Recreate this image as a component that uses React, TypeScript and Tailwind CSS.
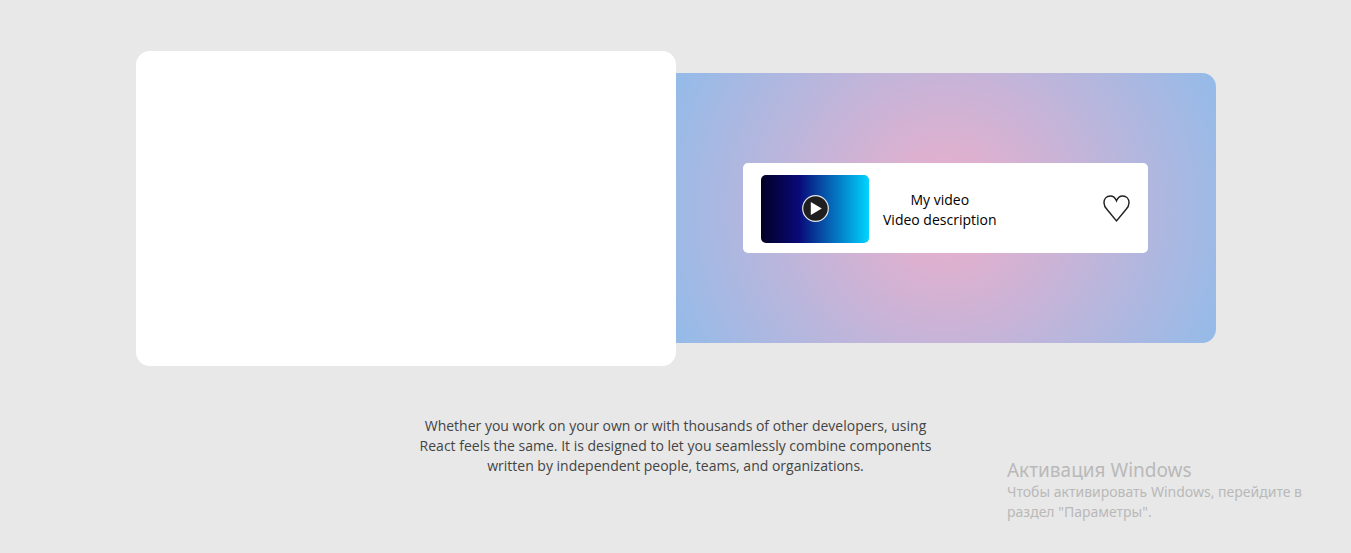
function PlayIcon() {
  return (
    <svg viewBox="0 0 27 27" className="size-[27px]" aria-hidden="true">
      <circle cx="13.5" cy="13.5" r="12.8" fill="#1f1f1f" stroke="#e6e6e6" strokeWidth="1.2" />
      <path d="M8.800 7v13L19.800 13.500z" fill="#fff" />
    </svg>
  );
}

function HeartIcon() {
  return (
    <svg viewBox="0 0 28 28" className="size-[27px]" fill="none" stroke="#202020" strokeWidth="1.5" aria-hidden="true">
      <path d="M14 6C12.600 2.600 10.200 1 7.600 1C3.600 1 1 4 1 8c0 3 1.400 5.200 3.400 7.400L14 26.800L23.600 15.400C25.600 13.200 27 11 27 8c0-4-2.600-7-6.600-7C17.800 1 15.400 2.600 14 6z" />
    </svg>
  );
}

function VideoCard({ title, description }: { title: string; description: string }) {
  return (
    <article className="flex w-3/4 items-center rounded-[5px] bg-white px-[18px] pt-3 pb-2.5 text-black">
      <button
        type="button"
        aria-label={`Play ${title}`}
        className="flex h-[68px] w-[108px] shrink-0 items-center justify-center rounded-[5px] bg-[linear-gradient(90deg,#020024_0%,#090979_35%,#00d4ff_100%)] pb-px"
      >
        <PlayIcon />
      </button>
      <div className="ml-3.5 pt-0.5 text-center">
        <h3>{title}</h3>
        <p>{description}</p>
      </div>
      <button type="button" aria-label="Like" className="ml-auto shrink-0 pb-px">
        <HeartIcon />
      </button>
    </article>
  );
}

export default function App() {
  return (
    <div className="relative flex min-h-screen flex-col items-center bg-[#e8e8e8] pt-[51px] font-['Open_Sans','Noto_Sans',sans-serif] text-sm leading-5">
      <main className="flex w-4/5 max-w-[1080px] flex-col items-center">
        <div className="flex w-full items-start">
          <section className="h-[315px] flex-1 rounded-[14px] bg-white" />
          <section className="mt-[22px] flex h-[270px] flex-1 items-center justify-center rounded-r-[14px] bg-[radial-gradient(circle,#eeaeca_0%,#94bbe9_100%)]">
            <VideoCard title="My video" description="Video description" />
          </section>
        </div>
        <p className="mt-[50px] max-w-[520px] text-center text-[#444]">
          Whether you work on your own or with thousands of other developers, using React feels the same. It is
          designed to let you seamlessly combine components written by independent people, teams, and organizations.
        </p>
      </main>
      <aside className="absolute right-6 bottom-[31px] w-80 font-['Noto_Sans',sans-serif] text-[#b9b9b9]">
        <h2 className="text-[19px] leading-6">Активация Windows</h2>
        <p>
          Чтобы активировать Windows, перейдите в<br />
          раздел "Параметры".
        </p>
      </aside>
    </div>
  );
}
